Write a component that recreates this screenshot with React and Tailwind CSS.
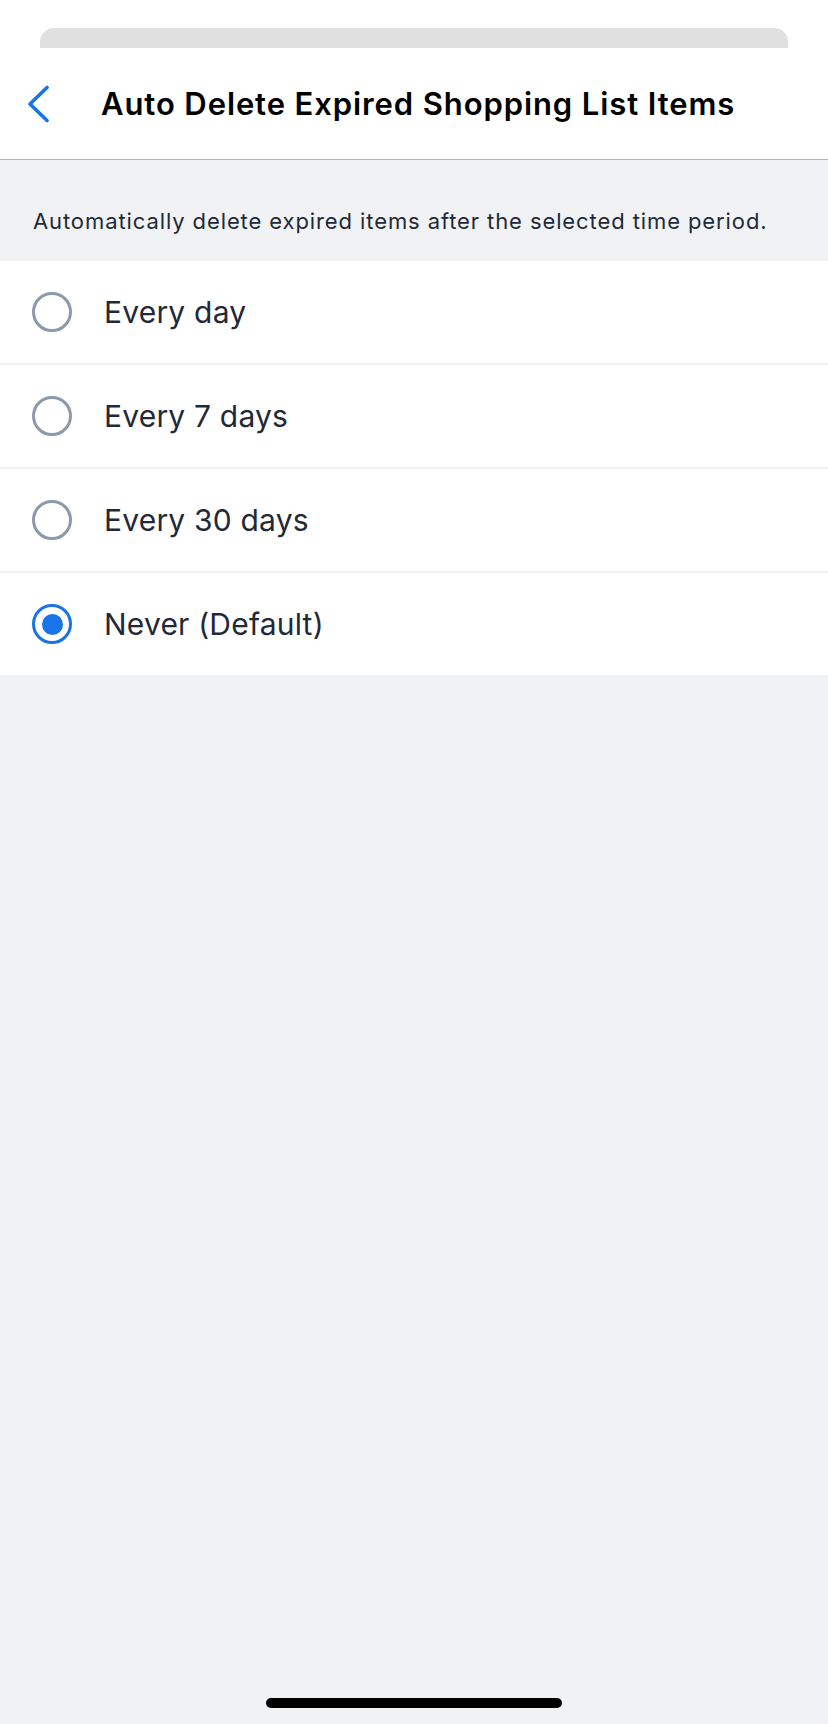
import React, { useState } from 'react'

const options = [
    { id: 'day', label: 'Every day' },
    { id: '7', label: 'Every 7 days' },
    { id: '30', label: 'Every 30 days' },
    { id: 'never', label: 'Never (Default)' },
]

function Radio({ checked }) {
    if (checked) {
        return (
            <div className="w-[40px] h-[40px] rounded-full border-[3.5px] border-[#1a73e8] flex items-center justify-center shrink-0">
                <div className="w-[21px] h-[21px] rounded-full bg-[#1a73e8]" />
            </div>
        )
    }
    return <div className="w-[40px] h-[40px] rounded-full border-[3.5px] border-[#8a99ab] shrink-0" />
}

export default function App() {
    const [selected, setSelected] = useState('never')

    return (
        <div className="w-[828px] h-[1724px] bg-[#f1f2f4] flex flex-col" style={{ fontFamily: 'Inter, "Noto Sans", sans-serif' }}>
            {/* header sheet */}
            <div className="h-[160px] bg-white border-b border-[#b5b5b8] flex flex-col">
                <div className="mt-[28px] mx-[40px] h-[20px] rounded-t-[14px] bg-[#e0e0e0]" />
                <div className="flex-1 flex items-center pl-[26px]">
                    <svg width="24" height="38" viewBox="0 0 24 38" fill="none" className="shrink-0">
                        <polyline points="21,2.5 4,19 21,35.5" stroke="#1a73e8" strokeWidth="3.6" strokeLinecap="round" strokeLinejoin="round" />
                    </svg>
                    <h1 className="ml-[51px] text-[31px] leading-none font-semibold text-black tracking-[0.9px] whitespace-nowrap">
                        Auto Delete Expired Shopping List Items
                    </h1>
                </div>
            </div>

            {/* description */}
            <div className="h-[101px] pt-[47px] px-[33px]">
                <p className="text-[22px] leading-[28px] text-[#1f2937] tracking-[0.9px] whitespace-nowrap">
                    Automatically delete expired items after the selected time period.
                </p>
            </div>

            {/* options */}
            <div className="bg-white">
                {options.map((o, i) => (
                    <button
                        key={o.id}
                        onClick={() => setSelected(o.id)}
                        className={`w-full h-[102px] flex items-center pl-[32px] text-left ${i > 0 ? 'border-t-2 border-[#eff0f2]' : ''} box-content`}
                    >
                        <Radio checked={selected === o.id} />
                        <span className="ml-[32px] text-[30px] leading-none text-[#1f2937] tracking-[0.2px]">{o.label}</span>
                    </button>
                ))}
            </div>

            <div className="flex-1" />

            {/* home indicator */}
            <div className="h-[26px] flex justify-center">
                <div className="w-[296px] h-[10px] rounded-full bg-black" />
            </div>
        </div>
    )
}
